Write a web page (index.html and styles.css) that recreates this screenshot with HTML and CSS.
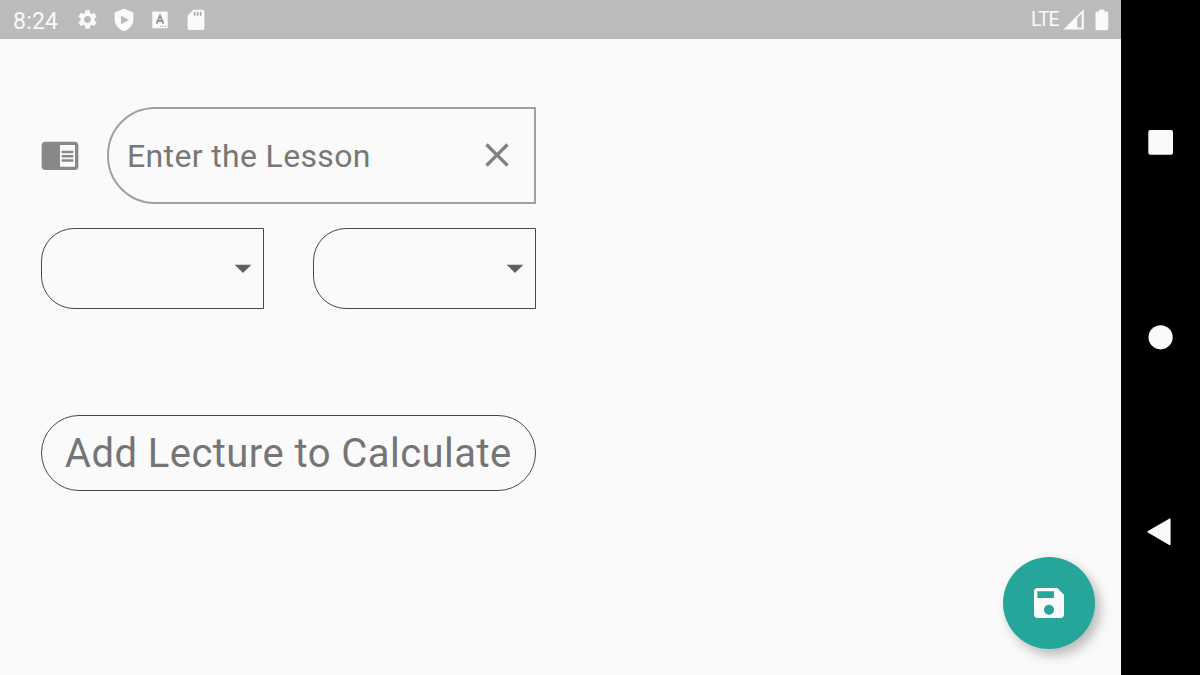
FILE: index.html
```html
<!DOCTYPE html>
<html lang="en">
<head>
<meta charset="utf-8">
<title>Lesson</title>
<link rel="stylesheet" href="styles.css">
</head>
<body>
<div class="device">
  <div class="app">
    <header class="status">
      <span class="clock">8:24</span>
      <svg class="gear" viewBox="0 0 24 24"><path d="M19.14 12.94c.04-.3.06-.61.06-.94 0-.32-.02-.64-.07-.94l2.03-1.58c.18-.14.23-.41.12-.61l-1.92-3.32c-.12-.22-.37-.29-.59-.22l-2.39.96c-.5-.38-1.03-.7-1.62-.94l-.36-2.54c-.04-.24-.24-.41-.48-.41h-3.84c-.24 0-.43.17-.47.41l-.36 2.54c-.59.24-1.13.57-1.62.94l-2.39-.96c-.22-.08-.47 0-.59.22L2.74 8.87c-.12.21-.08.47.12.61l2.03 1.58c-.05.3-.09.63-.09.94s.02.64.07.94l-2.03 1.58c-.18.14-.23.41-.12.61l1.92 3.32c.12.22.37.29.59.22l2.39-.96c.5.38 1.03.7 1.62.94l.36 2.54c.05.24.24.41.48.41h3.84c.24 0 .44-.17.47-.41l.36-2.54c.59-.24 1.13-.56 1.62-.94l2.39.96c.22.08.47 0 .59-.22l1.92-3.32c.12-.22.07-.47-.12-.61l-2.01-1.58zM12 15.6c-1.98 0-3.6-1.62-3.6-3.6s1.62-3.6 3.6-3.6 3.6 1.62 3.6 3.6-1.62 3.6-3.6 3.6z"/></svg>
      <svg class="shield" viewBox="0 0 20 24"><path fill-rule="evenodd" d="M10 .7 19.4 4.5V11c0 6-3.7 10.300-9.400 12.300C4.300 21.300.6 17 .6 11V4.500zM7 7.500v8.800l7.800-4.400z"/></svg>
      <svg class="keyboard" viewBox="0 0 16 18"><rect x=".3" y=".5" width="15.400" height="16.800" rx=".8"/><path class="ink" d="M4.500 12.700 8 4.500l3.500 8.200M5.700 10h4.600"/><path class="dots" d="M8 15.300h1.200M10.400 15.300h1.200M12.800 15.300h1.200"/></svg>
      <svg class="card" viewBox="0 0 18 22"><path d="M6.400.8h9.200a1.800 1.800 0 0 1 1.800 1.800v16.700a1.800 1.800 0 0 1-1.800 1.800H2.400a1.800 1.800 0 0 1-1.800-1.800V6.700z"/><path class="slots" d="M7.700 2.700v4M10.700 2.700v4M13.700 2.700v4"/></svg>
      <span class="network">LTE</span>
      <svg class="signal" viewBox="0 0 22 22"><path fill-rule="evenodd" d="M.3 20.600 20.800.2v20.400zM14.200 9v9.500h4.500V4.500z"/></svg>
      <svg class="battery" viewBox="0 0 14 22"><path d="M4.200.6h5.200v2h2.500c.8 0 1.300.6 1.300 1.300v15.900c0 .8-.6 1.400-1.300 1.400H1.900c-.8 0-1.400-.6-1.400-1.400V3.900c0-.7.600-1.300 1.400-1.300h2.300z"/></svg>
    </header>
    <main class="content">
      <div class="form">
        <div class="lesson-row">
          <svg class="icon reader" viewBox="0 0 24 24"><path d="M13 12h7v1.500h-7zm0-2.500h7V11h-7zm0 5h7V16h-7zM21 4H3c-1.100 0-2 .9-2 2v13c0 1.100.9 2 2 2h18c1.100 0 2-.9 2-2V6c0-1.100-.9-2-2-2zm0 15h-9V6h9v13z"/></svg>
          <div class="field">
            <span class="hint">Enter the Lesson</span>
            <svg class="icon close" viewBox="0 0 24 24"><path d="M19 6.410 17.590 5 12 10.590 6.410 5 5 6.410 10.590 12 5 17.590 6.410 19 12 13.410 17.590 19 19 17.590 13.410 12z"/></svg>
          </div>
        </div>
        <div class="selects">
          <div class="select"><svg class="icon" viewBox="0 0 24 24"><path d="M7 10l5 5 5-5z"/></svg></div>
          <div class="select"><svg class="icon" viewBox="0 0 24 24"><path d="M7 10l5 5 5-5z"/></svg></div>
        </div>
        <div class="summary"><span class="summary-text">Add Lecture to Calculate</span></div>
      </div>
    </main>
    <div class="fab"><svg class="icon" viewBox="0 0 24 24"><path d="M17 3H5c-1.110 0-2 .9-2 2v14c0 1.100.89 2 2 2h14c1.100 0 2-.9 2-2V7l-4-4zm-5 16c-1.660 0-3-1.340-3-3s1.340-3 3-3 3 1.340 3 3-1.340 3-3 3zm3-10H5V5h10v4z"/></svg></div>
  </div>
  <nav class="navbar">
    <svg class="key" viewBox="0 0 28 28"><rect x="1.300" y="1.100" width="24.700" height="24.700" rx="2"/></svg>
    <svg class="key" viewBox="0 0 28 28"><circle cx="13.600" cy="14.300" r="12.100"/></svg>
    <svg class="key" viewBox="0 0 28 28"><path d="M.9 12.900 22.200.7c.7-.4 1.400 0 1.400.8v24.700c0 .8-.7 1.200-1.400.8L.9 14.600c-.7-.4-.7-1.300 0-1.700z"/></svg>
  </nav>
</div>
</body>
</html>
```
FILE: styles.css
```css
* { box-sizing: border-box; }
body { margin: 0; font-family: Roboto, sans-serif; overflow: hidden; }
svg { display: block; flex: none; }
.device { display: flex; width: 1200px; height: 675px; background: #000; }
.app { position: relative; display: flex; flex-direction: column; width: 1121px; background: #fafafa; }
.status { display: flex; align-items: center; height: 39.400px; padding: 0 12px 0 13px; background: #bbb; color: #fafafa; fill: #fafafa; }
.clock { width: 63px; font-size: 23px; letter-spacing: 0.200px; line-height: 38px; padding-top: 4px; }
.gear { width: 23px; height: 23px; }
.shield { width: 20px; height: 24px; margin-left: 15px; }
.keyboard { width: 16px; height: 18px; margin-left: 18px; }
.card { width: 18px; height: 22px; margin-left: 19px; }
.ink { fill: none; stroke: #999; stroke-width: 1.900; }
.dots { stroke: #aaa; stroke-width: 1.200; }
.slots { stroke: #aaa; stroke-width: 1.700; }
.network { margin-left: auto; font-size: 19.500px; letter-spacing: -1px; }
.signal { width: 22px; height: 22px; margin-left: 4.300px; }
.battery { width: 14px; height: 22px; margin-left: 10px; }
.content { padding: 67.600px 0 0 40.500px; }
.form { width: 495.500px; }
.icon { width: 40px; height: 40px; }
.lesson-row { display: flex; align-items: center; justify-content: space-between; }
.reader { margin: 0 0 1px -0.100px; fill: #888; }
.field { display: flex; align-items: center; justify-content: space-between; width: 429.500px; height: 97px; padding: 0 17.500px 0 18.500px; border: 2px solid #a0a0a0; border-radius: 48px 0 0 48px; }
.hint { padding-top: 1.500px; font-size: 32px; letter-spacing: 0.350px; color: #777; white-space: nowrap; }
.close { margin-bottom: 1px; fill: #808080; }
.selects { display: flex; justify-content: space-between; margin-top: 24px; }
.select { display: flex; align-items: center; justify-content: flex-end; width: 223.500px; height: 81px; padding-bottom: 1px; border: 1px solid #484848; border-radius: 33px 0 0 33px; fill: #616161; }
.summary { display: flex; align-items: center; justify-content: center; height: 76px; margin-top: 106px; border: 1px solid #484848; border-radius: 38px; }
.summary-text { padding-top: 1.500px; font-size: 40px; letter-spacing: 0.450px; color: #757575; white-space: nowrap; }
.fab { position: absolute; right: 26px; bottom: 26px; display: flex; align-items: center; justify-content: center; width: 92px; height: 92px; border-radius: 50%; background: #26a69a; fill: #fafafa; box-shadow: 5px 6px 12px rgba(0, 0, 0, .26); }
.navbar { display: flex; flex-direction: column; justify-content: space-between; align-items: center; width: 79px; padding: 128.500px 0 129px; fill: #fafafa; }
.key { width: 28px; height: 28px; }
```
